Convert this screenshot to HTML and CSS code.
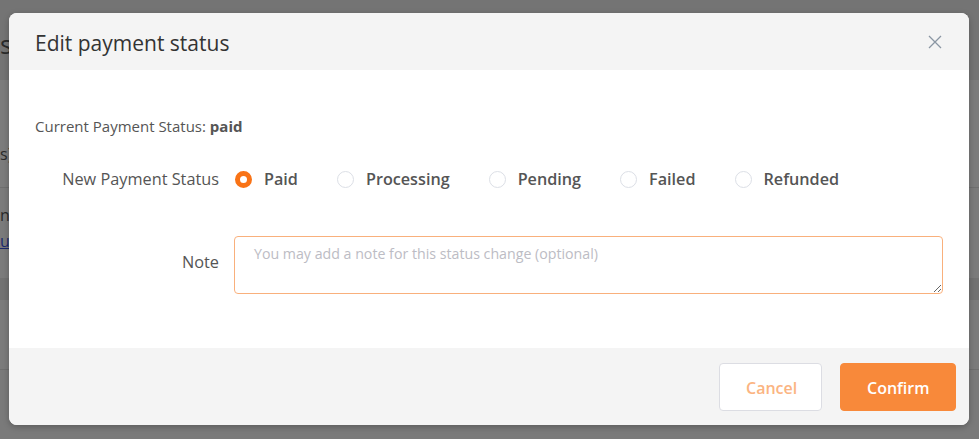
FILE: index.html
```html
<!DOCTYPE html>
<html lang="en">
<head>
<meta charset="utf-8">
<title>Edit payment status</title>
<link rel="stylesheet" href="styles.css">
</head>
<body>
<div class="page">
  <div class="band band-top"><span class="bg-title">st</span></div>
  <div class="band band-a"><span class="bg-text">s)</span></div>
  <div class="band band-b">
    <span class="bg-text">na</span>
    <a class="bg-link" href="#">u</a>
  </div>
  <div class="band band-c"></div>
  <div class="band band-d"></div>
  <div class="band band-e"></div>
</div>

<div class="modal" role="dialog" aria-labelledby="modal-title">
  <div class="modal-header">
    <h2 id="modal-title" class="modal-title">Edit payment status</h2>
    <button class="close-btn" aria-label="Close">
      <svg width="14" height="14" viewBox="0 0 14 14"><path d="M1 1 L13 13 M13 1 L1 13" stroke="#8a96a3" stroke-width="1.3" fill="none"/></svg>
    </button>
  </div>
  <div class="modal-body">
    <p class="current">Current Payment Status: <strong>paid</strong></p>
    <div class="form-row radio-row">
      <div class="form-label">New Payment Status</div>
      <div class="radio-group">
        <label class="radio checked"><span class="dot"></span><span>Paid</span></label>
        <label class="radio"><span class="dot"></span><span>Processing</span></label>
        <label class="radio"><span class="dot"></span><span>Pending</span></label>
        <label class="radio"><span class="dot"></span><span>Failed</span></label>
        <label class="radio"><span class="dot"></span><span>Refunded</span></label>
      </div>
    </div>
    <div class="form-row note-row">
      <div class="form-label note-label">Note</div>
      <textarea class="note" placeholder="You may add a note for this status change (optional)"></textarea>
    </div>
  </div>
  <div class="modal-footer">
    <button class="btn btn-cancel">Cancel</button>
    <button class="btn btn-confirm">Confirm</button>
  </div>
</div>
</body>
</html>
```

FILE: styles.css
```css
* { box-sizing: border-box; }
html, body { margin: 0; height: 100%; }
body {
  background: #7a7a7a;
  font-family: "Open Sans", "Noto Sans", sans-serif;
  overflow: hidden;
  position: relative;
}

/* dimmed page underneath */
.page { display: flex; flex-direction: column; }
.band { position: relative; }
.band-top { height: 80px; background: #747474; }
.band-a { height: 108px; background: #7c7c7c; border-bottom: 1px solid #6f6f6f; }
.band-b { height: 90px; background: #7b7b7b; }
.band-c { height: 22px; background: #727272; }
.band-d { height: 70px; background: #7b7b7b; border-bottom: 1px solid #6f6f6f; }
.band-e { height: 69px; background: #7a7a7a; }
.bg-title { position: absolute; left: 0; top: 27px; font-size: 26px; line-height: 34px; color: #2a2a2a; }
.bg-text { position: absolute; left: 0; top: 63px; font-size: 16px; color: #2a2a2a; }
.band-b .bg-text { top: 16px; }
.bg-link { position: absolute; left: 0; top: 42px; font-size: 16px; color: #1d2a6e; }

/* modal */
.modal {
  position: absolute;
  left: 9px;
  top: 13px;
  width: 960px;
  height: 412px;
  border-radius: 8px;
  overflow: hidden;
  background: #fff;
  display: flex;
  flex-direction: column;
  box-shadow: 0 2px 6px rgba(0,0,0,0.25);
}
.modal-header {
  height: 57px;
  background: #f4f4f4;
  display: flex;
  align-items: center;
  justify-content: space-between;
  padding: 2px 27px 0 26px;
}
.modal-title {
  margin: 0;
  font-size: 21px;
  font-weight: 400;
  color: #333;
}
.close-btn {
  border: 0;
  background: none;
  padding: 0;
  width: 14px;
  height: 14px;
  display: flex;
  cursor: pointer;
  margin-top: -2px;
}

.modal-body {
  flex: 1;
  padding: 46px 26px 0 26px;
}
.current {
  margin: 0;
  font-size: 15px;
  line-height: 20px;
  color: #555;
}
.current strong { font-weight: 700; }

.form-row {
  display: grid;
  grid-template-columns: 184px 1fr;
  column-gap: 15px;
}
.radio-row { margin-top: 31px; align-items: center; }
.note-row { margin-top: 45px; align-items: start; }
.form-label {
  text-align: right;
  font-size: 16.3px;
  line-height: 24px;
  color: #555;
}
.note-label { padding-top: 14px; }

.radio-group { display: flex; gap: 38px; align-items: center; }
.radio {
  display: flex;
  align-items: center;
  gap: 12px;
  font-size: 16.2px;
  line-height: 24px;
  font-weight: 600;
  color: #555;
  cursor: pointer;
}
.dot {
  width: 17px;
  height: 17px;
  border-radius: 50%;
  border: 1px solid #dcdfe6;
  background: #fff;
  margin-left: 1px;
}
.radio.checked .dot {
  border: 5.5px solid #f97316;
  background: #fff;
}

.note {
  display: block;
  width: 100%;
  height: 58px;
  border: 1px solid #f9b07c;
  border-radius: 4px;
  padding: 7px 19px;
  font-family: inherit;
  font-size: 14.2px;
  line-height: 20px;
  color: #333;
  outline: none;
}
.note::placeholder { color: #bcbcc4; }

.modal-footer {
  height: 77px;
  background: #f4f4f4;
  display: flex;
  justify-content: flex-end;
  align-items: flex-start;
  gap: 18px;
  padding: 15px 13px 0 0;
}
.btn {
  height: 48px;
  border-radius: 4px;
  font-family: inherit;
  font-size: 16px;
  font-weight: 600;
  padding: 1px 26px 0;
  cursor: pointer;
}
.btn-cancel {
  width: 103px;
  background: #fff;
  border: 1px solid #dcdde3;
  color: #fbb482;
}
.btn-confirm {
  width: 116px;
  background: #f8893a;
  border: 1px solid #f8893a;
  color: #fff;
}
```
